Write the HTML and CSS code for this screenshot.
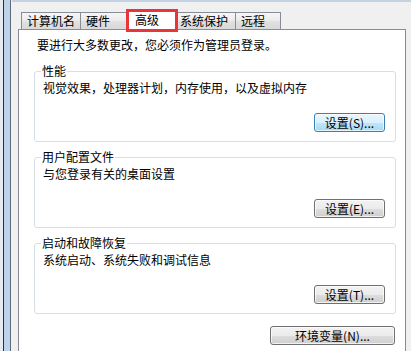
FILE: index.html
```html
<!DOCTYPE html>
<html lang="zh-CN">
<head>
<meta charset="utf-8">
<title>系统属性 - 高级</title>
<link rel="stylesheet" href="styles.css">
</head>
<body>
<div class="window">
  <div class="edge"></div>
  <div class="face">
    <div class="tabs">
      <div class="tab">计算机名</div>
      <div class="tab tab-roomy">硬件</div>
      <div class="tab sel">高级</div>
      <div class="tab tab-wide">系统保护</div>
      <div class="tab">远程</div>
    </div>
    <div class="page">
      <p class="intro">要进行大多数更改，您必须作为管理员登录。</p>
      <fieldset class="group first">
        <legend>性能</legend>
        <p>视觉效果，处理器计划，内存使用，以及虚拟内存</p>
        <div class="actions"><button class="btn focus">设置(S)...</button></div>
      </fieldset>
      <fieldset class="group">
        <legend>用户配置文件</legend>
        <p>与您登录有关的桌面设置</p>
        <div class="actions"><button class="btn">设置(E)...</button></div>
      </fieldset>
      <fieldset class="group">
        <legend>启动和故障恢复</legend>
        <p>系统启动、系统失败和调试信息</p>
        <div class="actions"><button class="btn">设置(T)...</button></div>
      </fieldset>
      <div class="actions env"><button class="btn wide">环境变量(N)...</button></div>
    </div>
  </div>
</div>
</body>
</html>
```

FILE: styles.css
```css
html, body {
  margin: 0;
  padding: 0;
}
body {
  width: 411px;
  height: 351px;
  overflow: hidden;
  font-family: "Noto Sans CJK SC", "Noto Sans", sans-serif;
  font-size: 12px;
  color: #000;
  background: #f0f0f0;
}
.window {
  display: flex;
  height: 351px;
}
.edge {
  width: 12px;
  flex: none;
  background: linear-gradient(to right, #e6eaef 0 3px, #2b2f36 3px 4px, #bcd3ea 4px 10px, #5f6b78 10px 11px, #f0f0f0 11px);
}
.face {
  flex: 1;
  display: flex;
  flex-direction: column;
  background: #f0f0f0;
  border-top: 2px solid #c3d2e2;
  padding: 8px 5px 0 6px;
}
.tabs {
  position: relative;
  z-index: 1;
  display: flex;
  align-items: flex-end;
  height: 19px;
  padding-left: 3px;
}
.tab {
  box-sizing: content-box;
  height: 16px;
  min-width: 34px;
  padding: 0 5px;
  margin-right: -1px;
  border: 1px solid #898c95;
  border-bottom: none;
  line-height: 16px;
  background: linear-gradient(#f6f6f6, #ececec 45%, #e0e0e0 55%, #d9d9d9);
  white-space: nowrap;
}
.tab.tab-roomy {
  min-width: 38px;
}
.tab.tab-wide {
  padding-right: 7px;
}
.tab.sel {
  position: relative;
  z-index: 2;
  height: 19px;
  padding: 0 7px;
  margin: 0 -3px -1px -2px;
  line-height: 18px;
  background: #fff;
}
.tab.sel::after {
  content: "";
  position: absolute;
  left: -2px;
  right: -2px;
  top: -2px;
  bottom: -2px;
  border: 3px solid #e8353c;
}
.page {
  flex: 1;
  background: #fff;
  border: 1px solid #898c95;
  border-bottom: none;
  padding: 7px 9px 0 15px;
}
.intro {
  margin: 0;
  padding-left: 3px;
  line-height: 16px;
}
.group {
  margin: 7px 0 0;
  border: 1px solid #d5dfe5;
  border-radius: 3px;
  padding: 1px 10px 9px 8px;
  min-width: 0;
}
.group.first {
  margin-top: 10px;
}
.group legend {
  margin-left: -2px;
  padding: 0 1px;
  line-height: 16px;
}
.group p {
  margin: 0;
  line-height: 16px;
}
.actions {
  display: flex;
  justify-content: flex-end;
  margin-top: 17px;
}
.actions.env {
  margin-top: 12px;
  padding-right: 1px;
}
.btn {
  box-sizing: border-box;
  width: 71px;
  height: 19px;
  padding: 0;
  font-family: inherit;
  font-size: 12px;
  line-height: 16px;
  color: #000;
  border: 1px solid #707070;
  border-radius: 3px;
  box-shadow: inset 0 0 0 1px rgba(255, 255, 255, 0.7);
  background: linear-gradient(#f2f2f2, #ebebeb 50%, #dddddd 52%, #cfcfcf);
}
.btn.focus {
  border-color: #3c7fb1;
  background: linear-gradient(#eaf6fd, #d9f0fc 50%, #bee6fd 52%, #a7d9f5);
}
.btn.wide {
  width: 125px;
}
```
